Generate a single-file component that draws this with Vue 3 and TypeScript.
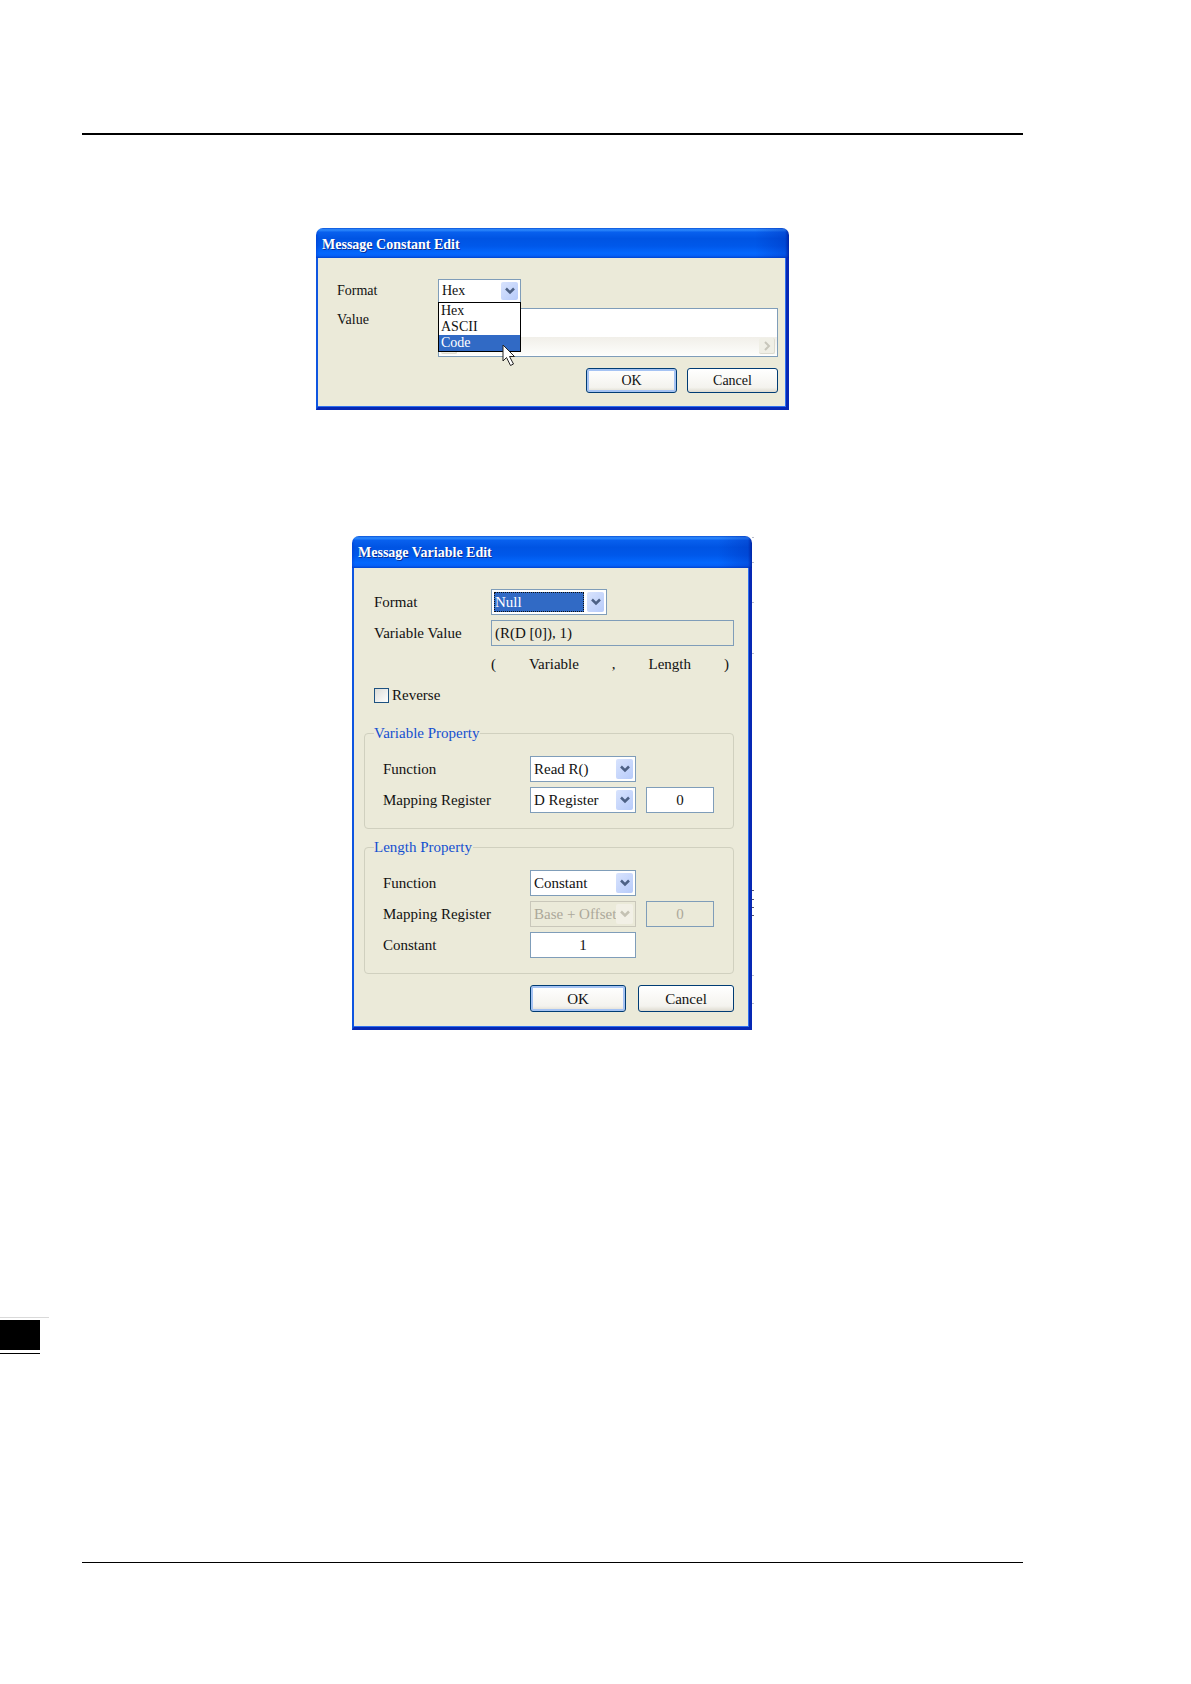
<script setup lang="ts">
import { ref } from 'vue'

const formats = ['Hex', 'ASCII', 'Code']
const constantFormat = ref('Hex')
const highlighted = ref('Code')
const constantValue = ref('')

const variableFormat = ref('Null')
const variableValue = ref('(R(D [0]), 1)')
const reverse = ref(false)
const variableFunction = ref('Read R()')
const variableRegister = ref('D Register')
const variableIndex = ref('0')
const lengthFunction = ref('Constant')
const lengthRegister = ref('Base + Offset')
const lengthIndex = ref('0')
const lengthConstant = ref('1')
</script>

<template>
  <div class="page">
    <hr class="rule heavy" />

    <main class="content">
      <section class="dialog constant" aria-labelledby="constant-title">
        <h2 id="constant-title" class="title">Message Constant Edit</h2>
        <form class="body" @submit.prevent>
          <div class="row">
            <label for="c-format">Format</label>
            <div class="combo">
              <select id="c-format" v-model="constantFormat">
                <option v-for="f in formats" :key="f">{{ f }}</option>
              </select>
              <span class="arrow"><svg viewBox="0 0 10 8"><path d="M1 1.5 5 5.5 9 1.5" /></svg></span>
              <ul class="list" role="listbox" aria-label="Format">
                <li
                  v-for="f in formats"
                  :key="f"
                  role="option"
                  :class="{ active: f === highlighted }"
                  @mouseenter="highlighted = f"
                  @click="constantFormat = f"
                >{{ f }}</li>
              </ul>
              <svg class="pointer" viewBox="0 0 14 23">
                <path d="M1 1V17L4.500 13.500 8.500 21.500 11.500 20 7.500 12.500H12.500Z" fill="#fff" stroke="#222" />
              </svg>
            </div>
          </div>
          <div class="row top">
            <label for="c-value">Value</label>
            <div class="memo">
              <textarea id="c-value" v-model="constantValue"></textarea>
              <div class="scroll">
                <span><svg viewBox="0 0 10 10"><path d="M7 1 3 5 7 9" /></svg></span>
                <span><svg viewBox="0 0 10 10"><path d="M3 1 7 5 3 9" /></svg></span>
              </div>
            </div>
          </div>
          <div class="actions">
            <button type="submit" class="default">OK</button>
            <button type="button">Cancel</button>
          </div>
        </form>
      </section>

      <section class="dialog variable" aria-labelledby="variable-title">
        <h2 id="variable-title" class="title">Message Variable Edit</h2>
        <form class="body" @submit.prevent>
          <div class="row">
            <label for="v-format">Format</label>
            <div class="combo focused">
              <select id="v-format" v-model="variableFormat">
                <option>Null</option>
              </select>
              <span class="arrow"><svg viewBox="0 0 10 8"><path d="M1 1.5 5 5.5 9 1.5" /></svg></span>
            </div>
          </div>
          <div class="row">
            <label for="v-value">Variable Value</label>
            <input id="v-value" v-model="variableValue" class="field wide" type="text" readonly />
          </div>
          <div class="row">
            <span></span>
            <div class="hint">
              <span>(</span><span>Variable</span><span>,</span><span>Length</span><span>)</span>
            </div>
          </div>
          <label class="check"><input v-model="reverse" type="checkbox" />Reverse</label>

          <fieldset>
            <legend>Variable Property</legend>
            <div class="row">
              <label for="vp-fn">Function</label>
              <div class="combo">
                <select id="vp-fn" v-model="variableFunction"><option>Read R()</option></select>
                <span class="arrow"><svg viewBox="0 0 10 8"><path d="M1 1.5 5 5.5 9 1.5" /></svg></span>
              </div>
            </div>
            <div class="row">
              <label for="vp-reg">Mapping Register</label>
              <div class="combo">
                <select id="vp-reg" v-model="variableRegister"><option>D Register</option></select>
                <span class="arrow"><svg viewBox="0 0 10 8"><path d="M1 1.5 5 5.5 9 1.5" /></svg></span>
              </div>
              <input v-model="variableIndex" class="field number" type="text" aria-label="Variable register index" />
            </div>
          </fieldset>

          <fieldset>
            <legend>Length Property</legend>
            <div class="row">
              <label for="lp-fn">Function</label>
              <div class="combo">
                <select id="lp-fn" v-model="lengthFunction"><option>Constant</option></select>
                <span class="arrow"><svg viewBox="0 0 10 8"><path d="M1 1.5 5 5.5 9 1.5" /></svg></span>
              </div>
            </div>
            <div class="row">
              <label for="lp-reg">Mapping Register</label>
              <div class="combo disabled">
                <select id="lp-reg" v-model="lengthRegister" disabled><option>Base + Offset</option></select>
                <span class="arrow"><svg viewBox="0 0 10 8"><path d="M1 1.5 5 5.5 9 1.5" /></svg></span>
              </div>
              <input v-model="lengthIndex" class="field number" type="text" disabled aria-label="Length register index" />
            </div>
            <div class="row">
              <label for="lp-const">Constant</label>
              <input id="lp-const" v-model="lengthConstant" class="field number long" type="text" />
            </div>
          </fieldset>

          <div class="actions">
            <button type="submit" class="default">OK</button>
            <button type="button">Cancel</button>
          </div>
        </form>
        <svg class="ticks" viewBox="0 0 2 494" aria-hidden="true">
          <path d="M0 1.500H2M0 26.500H2M0 66.500H2M0 117.500H2M0 439.500H2M0 467.500H2" stroke="#b9bccb" />
          <path d="M0 354.500H2M0 363.500H2M0 371.500H2M0 379.500H2" stroke="#55546a" />
        </svg>
      </section>
    </main>

    <hr class="rule" />
    <div class="tab" aria-hidden="true"></div>
  </div>
</template>

<style>
body {
  margin: 0;
  background: #fff;
}
</style>

<style scoped>
* {
  box-sizing: border-box;
}

.page {
  position: relative;
  display: flex;
  flex-direction: column;
  min-height: 100vh;
  padding: 133px 168px 121px 82px;
  font: 15px/18px "Liberation Serif", serif;
  color: #111;
}

.rule {
  width: 100%;
  height: 1px;
  margin: auto 0 0;
  border: 0;
  background: #000;
}

.rule.heavy {
  height: 2px;
  margin: 0;
}

.content {
  display: flex;
  flex-direction: column;
  align-items: center;
  gap: 126px;
  padding: 93px 0;
}

/* Dialog frame */
.dialog {
  position: relative;
  max-width: 100%;
}

.constant {
  width: 473px;
  font-size: 14px;
  --title: 30px;
  --label: 101px;
  --control: 24px;
  --button: 91px;
}

.variable {
  width: 400px;
  margin-right: 1px;
  --title: 32px;
  --label: 117px;
  --control: 26px;
  --button: 96px;
}

.title {
  height: var(--title);
  margin: 0;
  padding: 3px 6px 0;
  border-radius: 7px 7px 0 0;
  background:
    linear-gradient(90deg, rgba(0, 50, 200, 0.4), transparent 3px, transparent calc(100% - 34px), rgba(0, 36, 170, 0.3) calc(100% - 4px), rgba(0, 24, 150, 0.8)),
    linear-gradient(#0a52d8, #2f8bfd 6%, #0860ee 14%, #0054e3 35%, #0058ea 60%, #0468fe 84%, #0560f6 93%, #0043cf);
  color: #fff;
  font-size: 14px;
  font-weight: bold;
  line-height: 28px;
  text-shadow: 1px 1px #0a2f96;
}

.body {
  display: flex;
  flex-direction: column;
  border: solid #0628b4;
  border-width: 0 3px 3px 2px;
  border-left-color: #0e55e0;
  background: #ebead9;
  box-shadow: inset -1px -1px #2f70ee;
}

.constant .body {
  gap: 5px;
  padding: 21px 8px 14px 19px;
}

.variable .body {
  gap: 5px;
  padding: 21px 15px 15px 10px;
}

.row {
  display: flex;
  align-items: center;
  min-height: var(--control);
}

.row > :first-child {
  flex: 0 0 var(--label);
}

.row.top {
  align-items: flex-start;
}

.row.top label {
  line-height: 24px;
}

.variable .body > .row {
  padding-left: 10px;
}

/* Drop-downs */
.combo {
  position: relative;
  display: flex;
  width: 106px;
  height: var(--control);
  padding: 2px;
  border: 1px solid #7f9db9;
  background: #fff;
}

.constant .combo {
  width: 83px;
}

.variable .body > .row .combo {
  width: 116px;
}

.combo select {
  flex: 1;
  min-width: 0;
  padding: 0 0 0 1px;
  border: 0;
  outline: 0;
  appearance: none;
  background: transparent;
  color: inherit;
  font: inherit;
}

.combo.focused {
  gap: 3px;
}

.combo.focused select {
  border: 1px dotted #111;
  background: #316ac5;
  color: #fff;
  padding: 0;
}

.arrow {
  display: grid;
  flex: 0 0 17px;
  place-items: center;
  border-radius: 2px;
  background: linear-gradient(135deg, #d8e3fd, #b7cbfa);
}

.arrow svg {
  width: 10px;
  height: 8px;
  fill: none;
  stroke: #4d6185;
  stroke-width: 2.5;
}

.combo.disabled {
  border-color: #c9c7ba;
  background: #ebead9;
}

.combo.disabled select {
  color: #aca899;
  opacity: 1;
}

.combo.disabled .arrow {
  background: #f2f0e6;
}

.combo.disabled .arrow svg {
  stroke: #c5c2b4;
}

.list {
  position: absolute;
  top: 100%;
  right: -1px;
  left: -1px;
  z-index: 1;
  margin: 0;
  padding: 0;
  border: 1px solid #000;
  background: #fff;
  list-style: none;
  line-height: 16px;
}

.list li {
  padding-left: 2px;
}

.list .active {
  background: #316ac5;
  color: #fff;
}

.pointer {
  position: absolute;
  top: 64px;
  left: 63px;
  z-index: 2;
  width: 14px;
  height: 23px;
}

/* Text boxes */
.field {
  height: var(--control);
  padding: 0 3px;
  border: 1px solid #7f9db9;
  border-radius: 0;
  outline: 0;
  background: #fff;
  color: inherit;
  font: inherit;
}

.wide {
  flex: 1;
  min-width: 0;
  background: #ebead9;
}

.number {
  width: 68px;
  margin-left: 10px;
  text-align: center;
}

.number.long {
  width: 106px;
  margin-left: 0;
}

.number:disabled {
  background: #ebead9;
  color: #aca899;
}

.memo {
  flex: 1;
  min-width: 0;
  height: 49px;
  border: 1px solid #7f9db9;
  background: #fff;
}

.memo textarea {
  display: block;
  width: 100%;
  height: 28px;
  padding: 2px;
  border: 0;
  outline: 0;
  resize: none;
  background: transparent;
  font: inherit;
}

.scroll {
  display: flex;
  justify-content: space-between;
  height: 18px;
  padding: 1px 2px;
  background: linear-gradient(#f1efe9, #fdfdfb);
}

.scroll span {
  display: grid;
  width: 16px;
  place-items: center;
  border-right: 1px solid #dddbd0;
  border-bottom: 1px solid #dddbd0;
  border-radius: 2px;
  background: #f0efe6;
}

.scroll svg {
  width: 10px;
  height: 10px;
  fill: none;
  stroke: #c8c6bb;
  stroke-width: 2;
}

.hint {
  display: flex;
  flex: 1;
  justify-content: space-between;
  padding-right: 5px;
}

/* Check box */
.check {
  display: flex;
  align-items: center;
  gap: 3px;
  height: 26px;
  margin-bottom: 11px;
  padding-left: 10px;
}

.check input {
  width: 15px;
  height: 15px;
  margin: 0;
  border: 1px solid #1d5281;
  appearance: none;
  background: linear-gradient(135deg, #dcdcd7, #fff);
}

.check input:checked {
  background: #21a121;
}

/* Groups */
fieldset {
  display: flex;
  flex-direction: column;
  gap: 5px;
  min-width: 0;
  margin: 0 0 4px;
  padding: 14px 18px 15px;
  border: 1px solid #d0d0bf;
  border-radius: 4px;
  --label: 147px;
}

legend {
  height: 18px;
  margin-left: -9px;
  padding: 0 1px 0 0;
  color: #1550d0;
}

/* Buttons */
.actions {
  display: flex;
  justify-content: flex-end;
  gap: 10px;
  padding-top: 6px;
}

.variable .actions {
  gap: 12px;
  padding-top: 2px;
}

button {
  width: var(--button);
  height: 25px;
  padding: 0;
  border: 1px solid #003c74;
  border-radius: 3px;
  background: linear-gradient(#fff, #f4f3ee 80%, #dedbd0);
  color: inherit;
  font: inherit;
}

.variable button {
  height: 27px;
}

button.default {
  box-shadow: inset 0 0 0 2px #a5c3f3;
}

.ticks {
  position: absolute;
  top: 0;
  left: 100%;
  width: 2px;
  height: 494px;
}

/* Chapter marker on the page edge */
.tab {
  position: absolute;
  bottom: 330px;
  left: 0;
  width: 49px;
  height: 37px;
  background:
    linear-gradient(#d9d9d9, #d9d9d9) 0 0 / 49px 1px no-repeat,
    linear-gradient(#000, #000) 0 3px / 40px 30px no-repeat,
    linear-gradient(#000, #000) 0 36px / 40px 1px no-repeat;
}
</style>
